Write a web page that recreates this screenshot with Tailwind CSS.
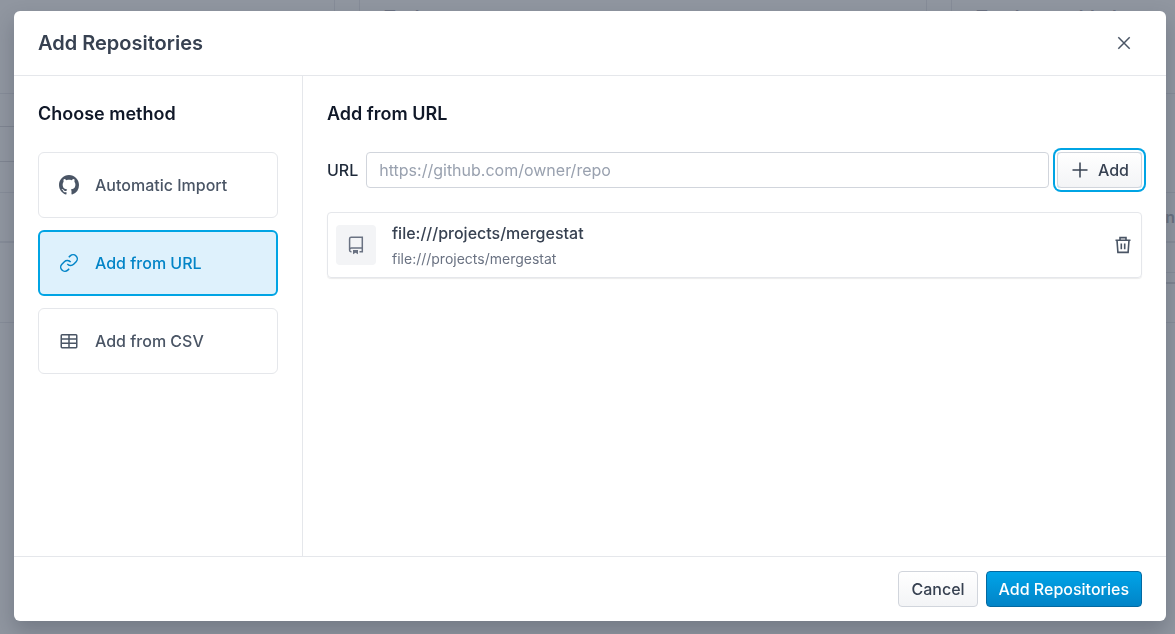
<!DOCTYPE html>
<html lang="en">
<head>
<meta charset="utf-8">
<meta name="viewport" content="width=device-width, initial-scale=1">
<title>Add Repositories</title>
<script src="https://cdn.jsdelivr.net/npm/@tailwindcss/browser@4"></script>
</head>
<body class="h-screen overflow-hidden bg-[#9096a0] font-['Inter',sans-serif] text-base text-[#374151]">

<!-- Dimmed page behind the dialog -->
<div class="flex h-full flex-col overflow-hidden text-[#6b7280]" aria-hidden="true">
  <div class="flex h-[94px] shrink-0 gap-6 border-b border-[#868c98]">
    <div class="w-[335px] shrink-0 border-r border-[#868c98]"></div>
    <div class="flex-1 border-x border-[#868c98] px-6 pt-1 text-lg font-semibold">Tasks</div>
    <div class="w-[224px] shrink-0 border-l border-[#868c98] px-6 pt-1 text-lg font-semibold">Tracker enabled</div>
  </div>
  <div class="flex h-[99px] shrink-0 flex-col border-b border-[#868c98]">
    <div class="mr-5 h-[33px] border-b border-[#7f8591]"></div>
    <div class="mr-5 h-[35px] border-b border-[#7f8591]"></div>
  </div>
  <div class="flex h-[50px] shrink-0 items-center justify-end border-b-2 border-[#868c98] text-base font-semibold">Action</div>
  <div class="flex h-20 shrink-0 flex-col items-end border-b border-[#868c98]">
    <div class="h-[30px] w-5 border-b border-[#868c98]"></div>
    <div class="h-[11px] w-5 border-b-2 border-[#7f8591]"></div>
  </div>
</div>

<div class="fixed inset-0 flex pt-[11px] pr-[9px] pb-[13px] pl-[14px]">
  <section role="dialog" aria-modal="true" aria-labelledby="dialog-title" class="flex min-w-0 flex-1 flex-col rounded-md bg-white shadow-[0_10px_20px_rgba(31,41,55,0.25)]">

    <header class="flex h-[65px] shrink-0 items-center justify-between border-b border-gray-200 pr-8 pl-6">
      <h1 id="dialog-title" class="text-xl font-semibold">Add Repositories</h1>
      <button type="button" aria-label="Close" class="text-gray-600">
        <svg class="size-5" viewBox="0 0 20 20" fill="none" stroke="currentColor" stroke-width="1.5"><path d="M4.3 4.3l11.4 11.4M15.7 4.3L4.3 15.7"/></svg>
      </button>
    </header>

    <div class="flex min-h-0 flex-1">
      <aside class="w-[289px] shrink-0 border-r border-gray-200 p-6">
        <h2 class="mb-6 text-lg font-semibold text-gray-900">Choose method</h2>
        <div class="flex flex-col gap-3 font-medium text-gray-600">
          <button type="button" class="flex h-[66px] items-center gap-4 rounded-md border border-gray-200 px-5">
            <svg class="size-5" viewBox="0 0 16 16" fill="currentColor"><path d="M8 0C3.58 0 0 3.58 0 8c0 3.54 2.29 6.53 5.47 7.59.4.07.55-.17.55-.38 0-.19-.01-.82-.01-1.49-2.01.37-2.53-.49-2.69-.94-.09-.23-.48-.94-.82-1.13-.28-.15-.68-.52-.01-.53.63-.01 1.08.58 1.23.82.72 1.21 1.87.87 2.33.66.07-.52.28-.87.51-1.07-1.78-.2-3.64-.89-3.64-3.95 0-.87.31-1.59.82-2.15-.08-.2-.36-1.02.08-2.12 0 0 .67-.21 2.2.82.64-.18 1.32-.27 2-.27s1.36.09 2 .27c1.53-1.04 2.2-.82 2.2-.82.44 1.1.16 1.92.08 2.12.51.56.82 1.27.82 2.15 0 3.07-1.87 3.75-3.65 3.95.29.25.54.73.54 1.48 0 1.07-.01 1.93-.01 2.2 0 .21.15.46.55.38A8.01 8.01 0 0 0 16 8c0-4.42-3.58-8-8-8z"/></svg>
            Automatic Import
          </button>
          <button type="button" aria-pressed="true" class="flex h-[66px] items-center gap-4 rounded-md border-2 border-[#00a4e4] bg-[#def1fc] px-[19px] text-[#0284c7]">
            <svg class="size-5" viewBox="0 0 24 24" fill="none" stroke="currentColor" stroke-width="1.8"><path d="M10 13a5 5 0 0 0 7.540.540l3-3a5 5 0 0 0-7.070-7.070l-1.720 1.710M14 11a5 5 0 0 0-7.540-.540l-3 3a5 5 0 0 0 7.070 7.070l1.710-1.710"/></svg>
            Add from URL
          </button>
          <button type="button" class="flex h-[66px] items-center gap-4 rounded-md border border-gray-200 px-5">
            <svg class="size-5" viewBox="0 0 20 20" fill="none" stroke="currentColor" stroke-width="1.5"><rect x="2.250" y="3.750" width="15.500" height="12.900" rx=".8"/><path d="M2.250 8h15.500M2.250 12.300h15.500M10 3.750v12.900"/></svg>
            Add from CSV
          </button>
        </div>
      </aside>

      <main class="min-w-0 flex-1 p-6">
        <h2 class="mb-6 text-lg font-semibold text-gray-900">Add from URL</h2>
        <form class="flex items-center gap-2">
          <label for="repo-url" class="font-medium text-gray-800">URL</label>
          <input id="repo-url" type="url" placeholder="https://github.com/owner/repo" class="h-9 min-w-0 flex-1 rounded border border-gray-300 px-3 placeholder:text-gray-400">
          <button type="button" class="flex h-9 items-center gap-2 rounded border border-gray-300 bg-linear-to-b from-white to-gray-100 px-3 font-medium ring-2 ring-[#00a4e4] ring-offset-2">
            <svg class="size-5" viewBox="0 0 20 20" fill="none" stroke="currentColor" stroke-width="1.5"><path d="M10 2.5v15M2.5 10h15"/></svg>
            Add
          </button>
        </form>
        <ul class="mt-6">
          <li class="flex h-[66px] items-center rounded border border-gray-200 px-2 shadow-[0_1px_1px_rgba(0,0,0,0.08)]">
            <span class="flex size-10 shrink-0 items-center justify-center rounded bg-gray-100 text-gray-500">
              <svg class="size-5" viewBox="0 0 20 20" fill="none" stroke="currentColor" stroke-width="1.5"><path d="M5.500 16.800H5A1.500 1.500 0 0 1 3.600 15.300V3.800A1.500 1.500 0 0 1 5.100 2.300H16.300V16.800H13.500M3.600 15A2 2 0 0 1 5.500 13H16.300"/><path d="M7 15h5v4.300l-2.500-1.500L7 19.300z" fill="currentColor" stroke="none"/></svg>
            </span>
            <div class="ml-4 min-w-0 flex-1">
              <p class="font-medium">file:///projects/mergestat</p>
              <p class="mt-1 text-sm text-gray-500">file:///projects/mergestat</p>
            </div>
            <button type="button" aria-label="Remove repository" class="text-gray-600">
              <svg class="size-5" viewBox="0 0 20 20" fill="none" stroke="currentColor" stroke-width="1.6"><path d="M2.500 5.300h15M7 5V2.600h6V5M4 5.300l.900 12.100h10.200L16 5.300M8.300 8.500v5.800M11.700 8.500v5.800"/></svg>
            </button>
          </li>
        </ul>
      </main>
    </div>

    <footer class="flex h-[65px] shrink-0 items-center justify-end gap-2 border-t border-gray-200 px-6 font-medium">
      <button type="button" class="h-9 rounded border border-gray-300 bg-linear-to-b from-white to-gray-100 px-3">Cancel</button>
      <button type="button" class="h-9 rounded border border-[#0369a1] bg-linear-to-b from-[#00a4e8] to-[#0284c7] px-3 text-white">Add Repositories</button>
    </footer>
  </section>
</div>
</body>
</html>
